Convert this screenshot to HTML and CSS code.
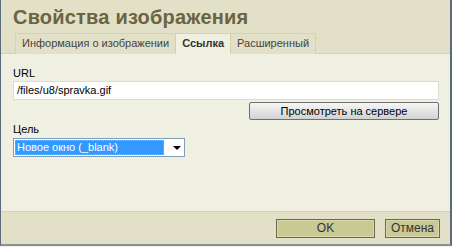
FILE: index.html
```html
<!DOCTYPE html>
<html lang="ru">
<head>
  <meta charset="UTF-8">
  <title>Свойства изображения</title>
  <link rel="stylesheet" href="styles.css">
</head>
<body>
  <div class="dialog">
    <div class="dialog-head">
      <h1 class="dialog-title">Свойства изображения</h1>
      <div class="tabs">
        <span class="tab">Информация о изображении</span>
        <span class="tab tab-active">Ссылка</span>
        <span class="tab">Расширенный</span>
      </div>
    </div>

    <div class="dialog-body">
      <label class="field-label">URL</label>
      <div class="text-input">/files/u8/spravka.gif</div>
      <div class="browse-row">
        <button class="btn-browse">Просмотреть на сервере</button>
      </div>

      <label class="field-label">Цель</label>
      <div class="select">
        <span class="select-value">Новое окно (_blank)</span>
        <span class="select-arrow"></span>
      </div>
    </div>

    <div class="dialog-foot">
      <button class="btn-foot btn-ok">OK</button>
      <button class="btn-foot btn-cancel">Отмена</button>
    </div>
  </div>
</body>
</html>
```

FILE: styles.css
```css
/* Переменные */
:root {
  --cor-cabecalho: #e2e0c6;
  --cor-corpo: #f0f0e2;
  --cor-titulo: #6b6443;
  --cor-borda: #5b6a7b;
  --cor-texto: #000;
}

* {
  margin: 0;
  padding: 0;
  box-sizing: border-box;
}

body {
  background: var(--cor-corpo);
  font-family: "Liberation Sans", Arial, sans-serif;
  font-size: 11px;
  color: var(--cor-texto);
}

.dialog {
  width: 452px;
  height: 246px;
  display: flex;
  flex-direction: column;
  border-left: 1px solid var(--cor-borda);
  border-right: 2px solid var(--cor-borda);
  border-bottom: 2px solid #8a9099;
  background: var(--cor-corpo);
}

/* Cabeçalho */
.dialog-head {
  background: var(--cor-cabecalho);
  padding: 4px 0 0 12px;
  border-bottom: 1px solid #d6d3a8;
}

.dialog-title {
  font-size: 20px;
  font-weight: bold;
  color: var(--cor-titulo);
  line-height: 27px;
  letter-spacing: 0.2px;
}

.tabs {
  display: flex;
  margin: 2px 0 -1px 2px;
}

.tab {
  display: block;
  padding: 3px 6px 3px 6px;
  border: 1px solid #d6d3a8;
  border-bottom: none;
  margin-right: -1px;
  color: #444;
  font-size: 11px;
  line-height: 13px;
  background: var(--cor-cabecalho);
}

.tab-active {
  background: var(--cor-corpo);
  font-weight: bold;
  color: #333;
  padding-bottom: 4px;
  position: relative;
  z-index: 1;
}

/* Corpo */
.dialog-body {
  flex: 1;
  padding: 12px 11px 0 12px;
}

.field-label {
  display: block;
  line-height: 14px;
}

.text-input {
  height: 19px;
  margin-top: 1px;
  background: #fff;
  border: 1px solid #dcdcd0;
  padding: 2px 3px;
  line-height: 13px;
}

.browse-row {
  display: flex;
  justify-content: flex-end;
  margin-top: 2px;
}

.btn-browse {
  width: 190px;
  height: 18px;
  font-family: inherit;
  font-size: 11px;
  border: 1px solid #707070;
  border-radius: 2px;
  background: linear-gradient(#f6f6f6, #e4e4e4 50%, #d2d2d2);
  color: #000;
}

.browse-row + .field-label {
  margin-top: 2px;
}

.select {
  width: 172px;
  height: 19px;
  margin-top: 2px;
  background: #fff;
  border: 1px solid #7f9db9;
  display: flex;
  align-items: center;
  padding: 1px;
}

.select-value {
  width: 149px;
  height: 15px;
  background: #3399ff;
  color: #fff;
  outline: 1px dotted #e8a060;
  outline-offset: -1px;
  padding-left: 2px;
  line-height: 15px;
}

.select-arrow {
  margin-left: 9px;
  width: 0;
  height: 0;
  border-left: 4px solid transparent;
  border-right: 4px solid transparent;
  border-top: 4px solid #000;
}

/* Rodapé */
.dialog-foot {
  height: 33px;
  background: var(--cor-cabecalho);
  border-top: 1px solid #d6d3a8;
  display: flex;
  justify-content: flex-end;
  align-items: center;
  gap: 10px;
  padding-right: 10px;
}

.btn-foot {
  height: 19px;
  font-family: inherit;
  font-size: 12px;
  color: #333;
  background: #c9c994;
  border: 1px solid #6b6b4a;
  box-shadow: inset 0 0 0 1px #d8d8b0;
}

.btn-ok {
  width: 99px;
}

.btn-cancel {
  width: 55px;
}
```
